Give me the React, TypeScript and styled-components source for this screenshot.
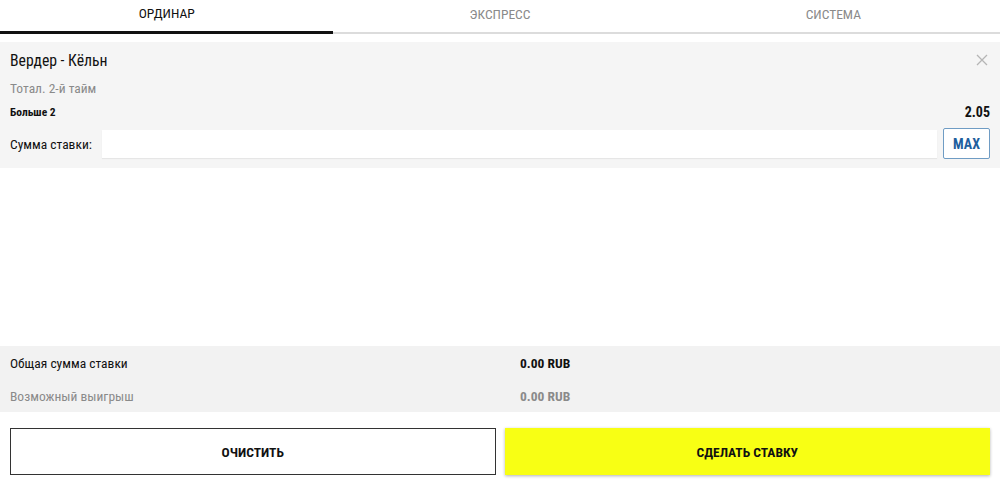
import React from 'react';
import styled, { createGlobalStyle } from 'styled-components';

const GlobalStyle = createGlobalStyle`
  html, body {
    margin: 0;
    padding: 0;
    background: #fff;
  }
  body {
    font-family: 'Roboto Condensed', Roboto, 'Liberation Sans', sans-serif;
    color: #111;
  }
`;

// Layout
const Page = styled.div`
  display: flex;
  flex-direction: column;
  height: 100vh;
  box-sizing: border-box;
`;

const Tabs = styled.nav`
  display: grid;
  grid-template-columns: repeat(3, 1fr);
`;

const Tab = styled.div<{ $active?: boolean }>`
  box-sizing: border-box;
  height: 34px;
  display: flex;
  align-items: flex-start;
  justify-content: center;
  padding-top: ${p => (p.$active ? '5px' : '6px')};
  font-size: 13.5px;
  color: ${p => (p.$active ? '#111' : '#8a8a8a')};
  border-bottom: ${p => (p.$active ? '3px solid #111' : '2px solid #dcdcdc')};
`;

const Card = styled.section`
  margin-top: 8px;
  background: #f5f5f5;
  padding: 8px 10px 9px;
`;

const TitleRow = styled.div`
  display: flex;
  justify-content: space-between;
  align-items: center;
  height: 20px;
`;

const Title = styled.h2`
  margin: 0;
  font-size: 15.7px;
  font-weight: 400;
`;

const CloseButton = styled.button`
  border: none;
  background: none;
  padding: 0;
  margin-top: 2px;
  width: 14px;
  height: 14px;
  display: flex;
  cursor: pointer;
`;

const Market = styled.div`
  margin-top: 8px;
  line-height: 20px;
  font-size: 13.5px;
  color: #8a8a8a;
`;

const OutcomeRow = styled.div`
  margin-top: 4px;
  display: flex;
  justify-content: space-between;
  line-height: 20px;
  font-weight: 700;
`;

const Outcome = styled.span`
  font-size: 11.5px;
`;

const Odds = styled.span`
  font-size: 14px;
`;

const StakeRow = styled.div`
  margin-top: 6px;
  display: flex;
  align-items: center;
  height: 31px;
`;

const StakeLabel = styled.label`
  font-size: 13.5px;
  margin-right: 10px;
  white-space: nowrap;
`;

const StakeInput = styled.input`
  flex: 1;
  height: 28px;
  box-sizing: border-box;
  border: none;
  background: #fff;
  box-shadow: 0 1px 1px rgba(0, 0, 0, 0.06);
  outline: none;
  padding: 0 8px;
  font-family: inherit;
  font-size: 14px;
`;

const MaxButton = styled.button`
  margin-left: 6px;
  width: 47px;
  height: 31px;
  box-sizing: border-box;
  background: #fff;
  border: 1px solid #6f9cc4;
  border-radius: 2px;
  color: #1f5f9e;
  font-family: inherit;
  font-weight: 700;
  font-size: 14px;
  padding: 0;
`;

const Spacer = styled.div`
  flex: 1;
`;

const Summary = styled.section`
  background: #f2f2f2;
`;

const SummaryRow = styled.div<{ $muted?: boolean }>`
  display: grid;
  grid-template-columns: 510px 1fr;
  align-items: center;
  height: 33px;
  padding-left: 10px;
  font-size: 13.5px;
  color: ${p => (p.$muted ? '#8a8a8a' : '#111')};
`;

const Amount = styled.span`
  font-weight: 700;
`;

const Actions = styled.div`
  display: grid;
  grid-template-columns: 1fr 1fr;
  gap: 9px;
  padding: 16px 10px 13px;
`;

const ActionButton = styled.button<{ $primary?: boolean }>`
  height: 47px;
  box-sizing: border-box;
  border: ${p => (p.$primary ? 'none' : '1px solid #333')};
  background: ${p => (p.$primary ? '#f8ff14' : '#fff')};
  box-shadow: ${p => (p.$primary ? '0 1px 3px rgba(0, 0, 0, 0.3)' : 'none')};
  font-family: inherit;
  font-weight: 700;
  font-size: 13.5px;
  color: #111;
  cursor: pointer;
`;

const tabs = ['ОРДИНАР', 'ЭКСПРЕСС', 'СИСТЕМА'];

const App: React.FC = () => {
  return (
    <Page>
      <GlobalStyle />
      <Tabs>
        {tabs.map((tab, i) => (
          <Tab key={tab} $active={i === 0}>{tab}</Tab>
        ))}
      </Tabs>

      <Card>
        <TitleRow>
          <Title>Вердер - Кёльн</Title>
          <CloseButton aria-label="Удалить">
            <svg width="12" height="12" viewBox="0 0 12 12">
              <path d="M1 1 L11 11 M11 1 L1 11" stroke="#b5b5b5" strokeWidth="1.3" />
            </svg>
          </CloseButton>
        </TitleRow>
        <Market>Тотал. 2-й тайм</Market>
        <OutcomeRow>
          <Outcome>Больше 2</Outcome>
          <Odds>2.05</Odds>
        </OutcomeRow>
        <StakeRow>
          <StakeLabel>Сумма ставки:</StakeLabel>
          <StakeInput type="text" />
          <MaxButton>MAX</MaxButton>
        </StakeRow>
      </Card>

      <Spacer />

      <Summary>
        <SummaryRow>
          <span>Общая сумма ставки</span>
          <Amount>0.00 RUB</Amount>
        </SummaryRow>
        <SummaryRow $muted>
          <span>Возможный выигрыш</span>
          <Amount>0.00 RUB</Amount>
        </SummaryRow>
      </Summary>

      <Actions>
        <ActionButton>ОЧИСТИТЬ</ActionButton>
        <ActionButton $primary>СДЕЛАТЬ СТАВКУ</ActionButton>
      </Actions>
    </Page>
  );
};

export default App;
